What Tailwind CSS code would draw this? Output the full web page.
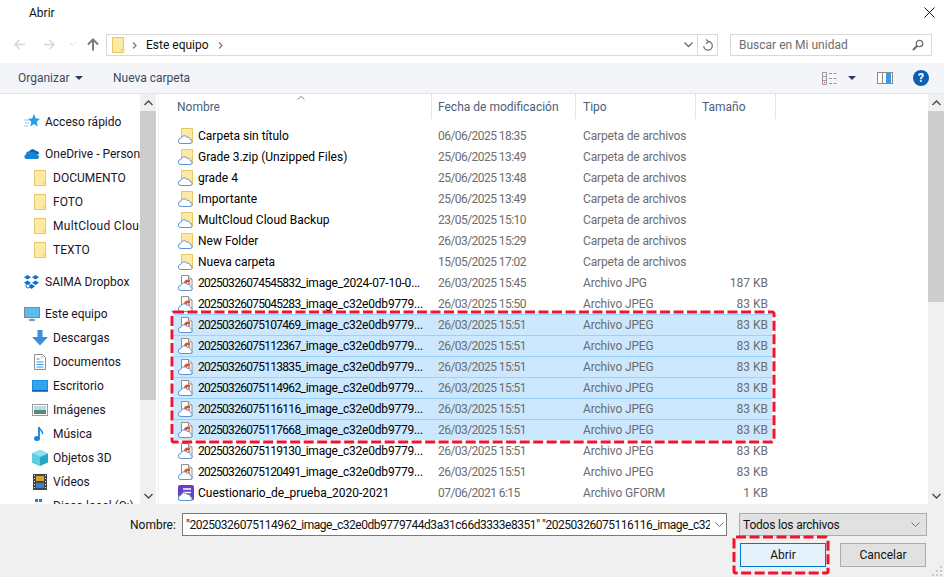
<!DOCTYPE html>
<html lang="es">
<head>
<meta charset="UTF-8" />
<title>Abrir</title>
<script src="https://cdn.jsdelivr.net/npm/@tailwindcss/browser@4"></script>
</head>
<body class="bg-white overflow-hidden">
<svg class="hidden">
  <symbol id="folder" viewBox="0 0 16 16">
    <path d="M2.500 .5h11v13.500l-1.500 1.500h-9.500z" fill="#fdeaa5" stroke="#e8c765"/>
    <path d="M11.500 12.500h2.500v3h-2.500z" fill="#fff3c4" stroke="#e8c765"/>
  </symbol>
  <symbol id="cloud" viewBox="0 0 16 16">
    <path d="M3 15.500a2.500 2.500 0 0 1-.3-5 3.500 3.500 0 0 1 6.300-1.200 2.600 2.600 0 0 1 3.300 2.400 1.900 1.900 0 0 1-.3 3.800z" fill="#fff" stroke="#5f92d8"/>
  </symbol>
  <symbol id="folderCloud" viewBox="0 0 16 16">
    <path d="M3.500 .5h11v13.500h-11z" fill="#fde9a3" stroke="#e8c765"/>
    <path d="M11.500 11.500h3v3h-3z" fill="#fff3c4" stroke="#e8c765"/>
    <use href="#cloud"/>
  </symbol>
  <symbol id="fileCloud" viewBox="0 0 16 16">
    <path d="M3.500 .5h7l3.500 3.500v11h-10.500z" fill="#fff" stroke="#8f8f8f"/>
    <path d="M10.500 .5v3.500h3.500" fill="#eee" stroke="#8f8f8f"/>
    <path d="M5.500 9c0-3.500 3.500-5.500 6.500-4v2.500c-1.800-1-3.500-.3-3.500 2z" fill="#d9502c"/>
    <path d="M10 7l2.300.5-.3 3-2-.5z" fill="#e98a63"/>
    <use href="#cloud"/>
  </symbol>
  <symbol id="formCloud" viewBox="0 0 16 16">
    <rect x="0" y="0" width="16" height="15.500" rx="2" fill="#6b3fc4"/>
    <path d="M5 4h8M5 7.500h8" stroke="#fff" stroke-width="1.500"/>
    <use href="#cloud"/>
  </symbol>
</svg>

<div class="w-[944px] h-[577px] flex flex-col text-[12px] leading-4 text-[#111] font-['Roboto',sans-serif]">
  <!-- title bar -->
  <div class="h-[34px] shrink-0 flex items-start justify-between">
    <span class="ml-[29px] mt-[5px]">Abrir</span>
    <svg class="mt-[7px] mr-[9px]" width="11" height="11" viewBox="0 0 11 11"><path d="M.5 .5l10 10M10.500 .5l-10 10" stroke="#111" fill="none"/></svg>
  </div>

  <!-- nav bar -->
  <div class="h-[29px] shrink-0 flex items-start">
    <div class="w-[106px] h-[21px] flex items-center relative shrink-0">
      <svg class="absolute left-[13px] top-[4px]" width="13" height="13" viewBox="0 0 13 13"><path d="M12 6.500H2M6.500 2L2 6.500 6.500 11" stroke="#d6d6d6" stroke-width="1.500" fill="none"/></svg>
      <svg class="absolute left-[43px] top-[4px]" width="13" height="13" viewBox="0 0 13 13"><path d="M1 6.500h10M6.500 2L11 6.500 6.500 11" stroke="#d6d6d6" stroke-width="1.500" fill="none"/></svg>
      <svg class="absolute left-[69px] top-[8px]" width="7" height="5" viewBox="0 0 7 5"><path d="M.5 .5l3 3 3-3" stroke="#d6d6d6" fill="none"/></svg>
      <svg class="absolute left-[87px] top-[4px]" width="12" height="13" viewBox="0 0 12 13"><path d="M6 12.500V2M1 6.500l5-5 5 5" stroke="#7d7d7d" stroke-width="2" fill="none"/></svg>
    </div>
    <div class="w-[612px] h-[22px] border border-[#d9d9d9] flex items-center shrink-0">
      <svg class="ml-[3px]" width="16" height="16"><use href="#folder"/></svg>
      <svg class="ml-[6px]" width="5" height="7" viewBox="0 0 5 7"><path d="M1 .5l3 3-3 3" stroke="#777" stroke-width="1.200" fill="none"/></svg>
      <span class="ml-[9px]">Este equipo</span>
      <svg class="ml-[9px]" width="5" height="7" viewBox="0 0 5 7"><path d="M1 .5l3 3-3 3" stroke="#777" stroke-width="1.200" fill="none"/></svg>
      <svg class="ml-auto mr-[4px]" width="9" height="6" viewBox="0 0 9 6"><path d="M.5 .5l4 4 4-4" stroke="#6b6b6b" stroke-width="1.300" fill="none"/></svg>
      <div class="w-[20px] h-full border-l border-[#d9d9d9] flex items-center justify-center">
        <svg width="12" height="13" viewBox="0 0 12 13"><path d="M6 2.500a4.300 4.300 0 1 1-4.300 4.500M4 .5l2.500 2-2.500 2.200" stroke="#777" stroke-width="1.300" fill="none"/></svg>
      </div>
    </div>
    <div class="ml-[12px] w-[202px] h-[22px] border border-[#d9d9d9] flex items-center justify-between pl-[8px] pr-[7px] text-[#6d6d6d]">
      <span>Buscar en Mi unidad</span>
      <svg width="12" height="12" viewBox="0 0 12 12"><circle cx="7.500" cy="4.500" r="3.200" stroke="#6b6b6b" stroke-width="1.300" fill="none"/><path d="M5 7l-4 4" stroke="#6b6b6b" stroke-width="2"/></svg>
    </div>
  </div>

  <!-- toolbar -->
  <div class="h-[31px] shrink-0 flex items-center bg-[#f4f5f8] border-b border-[#e4e4e4] text-[#3d4a5c]">
    <span class="ml-[18px] w-[52px]">Organizar</span>
    <svg class="ml-[5px]" width="8" height="4" viewBox="0 0 8 4"><path d="M0 0h8L4 4z" fill="#2b3f5c"/></svg>
    <span class="ml-[30px]">Nueva carpeta</span>
    <svg class="ml-auto" width="17" height="13" viewBox="0 0 17 13"><path d="M.5 .5h4v12h-4zM.5 4.500h4M.5 8.500h4M7 1.500h3M11.500 1.500h3M7 6.500h3M11.500 6.500h3M7 11.500h3M11.500 11.500h3" stroke="#9a9a9a" fill="none"/><rect x="2" y="10" width="1" height="1" fill="#c0392b"/></svg>
    <svg class="ml-[9px]" width="8" height="4" viewBox="0 0 8 4"><path d="M0 0h8L4 4z" fill="#2b3f5c"/></svg>
    <svg class="ml-[21px]" width="16" height="12" viewBox="0 0 16 12"><rect x=".5" y=".5" width="15" height="11" fill="#fff" stroke="#8a8a8a"/><rect x="9" y="1" width="5" height="10" fill="#3f97e8"/><rect x="5" y="1" width="1" height="10" fill="#8a8a8a"/></svg>
    <div class="ml-[20px] mr-[15px] w-4 h-4 rounded-full bg-[#0a5fb4] text-white font-bold text-[12px] flex items-center justify-center">?</div>
  </div>

  <!-- main -->
  <div class="h-[410px] shrink-0 flex">
    <aside class="w-[156px] shrink-0 flex">
      <nav class="w-[140px] overflow-hidden pt-[16px] whitespace-nowrap text-[#1b1428]" id="side"></nav>
      <div class="w-[16px] bg-[#f0f0f0] flex flex-col items-center">
        <div class="h-[17px] w-full flex items-center justify-center">
          <svg width="9" height="6" viewBox="0 0 9 6"><path d="M.5 5l4-4 4 4" stroke="#505050" stroke-width="1.500" fill="none"/></svg>
        </div>
        <div class="h-[289px] w-full bg-[#cdcdcd]"></div>
        <div class="mt-auto h-[17px] w-full flex items-center justify-center">
          <svg width="9" height="6" viewBox="0 0 9 6"><path d="M.5 1l4 4 4-4" stroke="#505050" stroke-width="1.500" fill="none"/></svg>
        </div>
      </div>
    </aside>
    <div class="w-[3px] shrink-0 border-r border-[#f0f0f0]"></div>

    <section class="flex-1 min-w-0 relative">
      <!-- column header -->
      <div class="h-[25px] flex text-[#4c607a] relative">
        <svg class="absolute left-[138px] top-[2px]" width="8" height="4" viewBox="0 0 8 4"><path d="M.5 3.500L4 .5l3.500 3" stroke="#8a8a8a" fill="none"/></svg>
        <div class="w-[273px] pl-[18px] pt-[5px] border-r border-[#e5e5e5]">Nombre</div>
        <div class="w-[144px] pl-[6px] pt-[5px] border-r border-[#e5e5e5]">Fecha de modificación</div>
        <div class="w-[120px] pl-[7px] pt-[5px] border-r border-[#e5e5e5]">Tipo</div>
        <div class="w-[80px] pl-[6px] pt-[5px] border-r border-[#e5e5e5]">Tamaño</div>
      </div>
      <!-- rows -->
      <div class="ml-[15px] w-[598px] mt-[6px]">
        <div id="rowsTop"></div>
        <div class="relative">
          <div id="rowsSel"></div>
          <svg class="absolute left-[-2px] top-[-2px] overflow-visible" width="603" height="131" viewBox="0 0 603 131"><rect x="0" y="0" width="602" height="130" rx="2" fill="none" stroke="#ee1530" stroke-width="3" stroke-dasharray="10 3.500"/></svg>
        </div>
        <div id="rowsEnd"></div>
      </div>
      <!-- list scrollbar -->
      <div class="absolute right-0 top-0 bottom-0 w-[16px] bg-[#f0f0f0] flex flex-col">
        <div class="h-[17px] flex items-center justify-center">
          <svg width="9" height="6" viewBox="0 0 9 6"><path d="M.5 5l4-4 4 4" stroke="#505050" stroke-width="1.500" fill="none"/></svg>
        </div>
        <div class="h-[191px] bg-[#cdcdcd]"></div>
        <div class="mt-auto h-[17px] flex items-center justify-center">
          <svg width="9" height="6" viewBox="0 0 9 6"><path d="M.5 1l4 4 4-4" stroke="#505050" stroke-width="1.500" fill="none"/></svg>
        </div>
      </div>
    </section>
  </div>

  <!-- footer -->
  <div class="flex-1 bg-[#f0f0f0] relative">
    <div class="flex items-center pt-[9px]">
      <span class="ml-[130px] w-[52px]">Nombre:</span>
      <div class="w-[545px] h-[23px] bg-white border border-[#7a7a7a] flex items-center pl-[3px] pr-[2px]">
        <span class="whitespace-nowrap overflow-hidden w-[524px] tracking-[-0.46px]">"20250326075114962_image_c32e0db9779744d3a31c66d3333e8351" "20250326075116116_image_c32</span>
        <svg class="ml-auto shrink-0" width="9" height="5" viewBox="0 0 9 5"><path d="M.5 .5l4 4 4-4" stroke="#707070" fill="none"/></svg>
      </div>
      <div class="ml-[12px] w-[188px] h-[23px] bg-[#e1e1e1] border border-[#adadad] flex items-center justify-between pl-[3px] pr-[6px]">
        <span class="tracking-[-0.2px]">Todos los archivos</span>
        <svg width="9" height="5" viewBox="0 0 9 5"><path d="M.5 .5l4 4 4-4" stroke="#707070" fill="none"/></svg>
      </div>
    </div>
    <div class="flex justify-end gap-[14px] pr-[18px] mt-[7px]">
      <div class="relative">
        <div class="w-[86px] h-[24px] bg-[#e5f1fb] border border-[#0078d7] flex items-center justify-center">Abrir</div>
        <svg class="absolute left-[-6px] top-[-6px] overflow-visible" width="95" height="37" viewBox="0 0 95 37"><rect x="0" y="0" width="94" height="36" rx="2" fill="none" stroke="#ee1530" stroke-width="3" stroke-dasharray="10 3.500"/></svg>
      </div>
      <div class="w-[86px] h-[24px] bg-[#e1e1e1] border border-[#adadad] flex items-center justify-center">Cancelar</div>
    </div>
    <svg class="absolute right-[1px] bottom-[1px]" width="11" height="11" viewBox="0 0 11 11"><path d="M8 1h2v2H8zM4 5h2v2H4zM8 5h2v2H8zM0 9h2v2H0zM4 9h2v2H4zM8 9h2v2H8z" fill="#c9c9c9"/></svg>
  </div>
</div>

<script>
  // sidebar icons
  const folderIcon = '<svg width="16" height="16"><use href="#folder"/></svg>';
  const sideIcons = {
    star: '<svg width="16" height="16" viewBox="0 0 16 16"><path d="M10 0l1.800 4.500 4.200.3-3.300 3 1.100 4.700-3.800-2.500-3.800 2.500 1.100-4.700-3.300-3 4.200-.3z" fill="#2b9be8"/><path d="M0 6h5M1 9h4M0 12h4" stroke="#8cc8f0"/></svg>',
    onedrive: '<svg width="16" height="16" viewBox="0 0 16 16"><path d="M5 5.500a4 4 0 0 1 7-.5 3 3 0 0 1 3 3L9 9z" fill="#0a5fb4"/><path d="M2.500 13a2.300 2.300 0 0 1-.5-4.500 3 3 0 0 1 5-2.500 3.500 3.500 0 0 1 5 2.500 2.300 2.300 0 0 1 3 2.500 2 2 0 0 1-1.500 2z" fill="#1783d9"/></svg>',
    dropbox: '<svg width="16" height="16" viewBox="0 0 16 16"><path d="M3.500 1l3.500 2.300-3.500 2.300L0 3.300zM11.500 1L15 3.300l-3.500 2.300L8 3.300zM3.500 6.500L7 8.800l-3.500 2.300L0 8.800zM11.500 6.500L15 8.800l-3.500 2.300L8 8.800zM7.500 10l3.500 2.300-3.500 2.700-3.500-2.700z" fill="#0a6fdc"/><circle cx="4" cy="12" r="2" fill="#fff" stroke="#0a6fdc"/></svg>',
    pc: '<svg width="16" height="16" viewBox="0 0 16 16"><rect x=".5" y="1.500" width="15" height="10" fill="#5cbcf2" stroke="#7a8a99"/><path d="M5 14h6" stroke="#8a9aa8" stroke-width="2"/><path d="M8 12v2" stroke="#8a9aa8"/></svg>',
    down: '<svg width="16" height="16" viewBox="0 0 16 16"><path d="M5.500 0h5v7H16l-8 8.500L0 7h5.500z" fill="#3a8edb"/></svg>',
    docs: '<svg width="16" height="16" viewBox="0 0 16 16"><path d="M2.500 .5h8l3 3v12h-11z" fill="#fff" stroke="#8f8f8f"/><path d="M4.500 5h3M4.500 8h7M4.500 10.500h7M4.500 13h7" stroke="#3a8edb"/><path d="M9 3h2" stroke="#999"/></svg>',
    desk: '<svg width="16" height="16" viewBox="0 0 16 16"><rect x="0" y="2" width="16" height="12" fill="#1a8fe3"/><path d="M.5 12.500h15" stroke="#0a5fb4"/><rect x="1" y="3" width="14" height="9" fill="#32a4ee"/></svg>',
    img: '<svg width="16" height="16" viewBox="0 0 16 16"><rect x=".5" y="2.500" width="15" height="11" fill="#fff" stroke="#9a9a9a"/><rect x="2" y="4" width="12" height="4" fill="#b8d8ee"/><rect x="2" y="8" width="12" height="4" fill="#5f8a72"/></svg>',
    music: '<svg width="16" height="16" viewBox="0 0 16 16"><path d="M7 1v10.500" stroke="#1783d9" stroke-width="1.800" fill="none"/><path d="M7 1c.5 3 4 3.500 3.500 7" stroke="#1783d9" stroke-width="1.500" fill="none"/><ellipse cx="5" cy="12.500" rx="3" ry="2.500" fill="#1783d9"/></svg>',
    obj: '<svg width="16" height="16" viewBox="0 0 16 16"><path d="M8 0l8 3.500v9L8 16 0 12.500v-9z" fill="#29a6c4"/><path d="M8 0l8 3.500L8 7 0 3.500z" fill="#8fe3ee"/><path d="M0 3.500L8 7v9L0 12.500z" fill="#5fcfe0"/></svg>',
    video: '<svg width="16" height="16" viewBox="0 0 16 16"><rect x="1" y="0" width="14" height="16" fill="#444"/><rect x="4" y="2" width="8" height="5" fill="#d4a72c"/><rect x="4" y="9" width="8" height="5" fill="#3a7fd0"/><path d="M2.500 1v14M13.500 1v14" stroke="#ddd" stroke-dasharray="1 2"/></svg>',
    win: '<svg width="16" height="16" viewBox="0 0 16 16"><path d="M3 1h3v3H3zM7 1h3v3H7z" fill="#1783d9"/></svg>'
  };
  const sideItems = [
    ["Acceso rápido", sideIcons.star, 0, 0],
    ["OneDrive - Personal", sideIcons.onedrive, 0, 8],
    ["DOCUMENTO", folderIcon, 1, 0],
    ["FOTO", folderIcon, 1, 0],
    ["<span class='tracking-[0.3px]'>MultCloud Cloud Backup</span>", folderIcon, 1, 0],
    ["TEXTO", folderIcon, 1, 0],
    ["SAIMA Dropbox", sideIcons.dropbox, 0, 8],
    ["Este equipo", sideIcons.pc, 0, 8],
    ["Descargas", sideIcons.down, 1, 0],
    ["Documentos", sideIcons.docs, 1, 0],
    ["Escritorio", sideIcons.desk, 1, 0],
    ["Imágenes", sideIcons.img, 1, 0],
    ["Música", sideIcons.music, 1, 0],
    ["Objetos 3D", sideIcons.obj, 1, 0],
    ["Vídeos", sideIcons.video, 1, 0],
    ["Disco local (C:)", sideIcons.win, 1, 0]
  ];
  document.getElementById("side").innerHTML = sideItems.map(([name, icon, child, gap]) => `
    <div class="h-[24px] flex items-center ${child ? "pl-[32px]" : "pl-[24px]"} ${gap ? "mt-[8px]" : ""}">
      <span class="w-[21px] shrink-0">${icon}</span><span>${name}</span>
    </div>`).join("");

  // file list
  const longName = "_image_c32e0db9779...";
  const rows = [
    ["Carpeta sin título", "06/06/2025 18:35", "Carpeta de archivos", "", "folderCloud"],
    ["Grade 3.zip (Unzipped Files)", "25/06/2025 13:49", "Carpeta de archivos", "", "folderCloud"],
    ["grade 4", "25/06/2025 13:48", "Carpeta de archivos", "", "folderCloud"],
    ["Importante", "25/06/2025 13:49", "Carpeta de archivos", "", "folderCloud"],
    ["MultCloud Cloud Backup", "23/05/2025 15:10", "Carpeta de archivos", "", "folderCloud"],
    ["New Folder", "26/03/2025 15:29", "Carpeta de archivos", "", "folderCloud"],
    ["Nueva carpeta", "15/05/2025 17:02", "Carpeta de archivos", "", "folderCloud"],
    ["20250326074545832_image_2024-07-10-0...", "26/03/2025 15:45", "Archivo JPG", "187 KB", "fileCloud"],
    ["20250326075045283" + longName, "26/03/2025 15:50", "Archivo JPEG", "83 KB", "fileCloud"]
  ];
  const selected = ["075107469", "075112367", "075113835", "075114962", "075116116", "075117668"].map(id =>
    ["20250326" + id + longName, "26/03/2025 15:51", "Archivo JPEG", "83 KB", "fileCloud"]);
  const rest = [
    ["20250326075119130" + longName, "26/03/2025 15:51", "Archivo JPEG", "83 KB", "fileCloud"],
    ["20250326075120491" + longName, "26/03/2025 15:51", "Archivo JPEG", "83 KB", "fileCloud"],
    ["Cuestionario_de_prueba_2020-2021", "07/06/2021 6:15", "Archivo GFORM", "1 KB", "formCloud"]
  ];
  // long numeric names: digits are tighter than the rest of the string
  function nameHtml(name) {
    if (!/^\d{17}_/.test(name)) return `<span class="ml-[4px]">${name}</span>`;
    return `<span class="ml-[4px] tracking-[-0.2px]"><span class="tracking-[-0.72px]">${name.slice(0, 17)}</span>${name.slice(17)}</span>`;
  }
  function rowHtml([name, date, type, size, icon], sel) {
    return `<div class="h-[21px] grid grid-cols-[264px_145px_1fr] items-center ${sel ? "bg-[#cce8ff] border-t border-[#99d1ff] pb-px" : "border-y border-transparent"}">
      <div class="flex items-center pl-[4px] whitespace-nowrap text-black"><svg class="shrink-0" width="16" height="16"><use href="#${icon}"/></svg>${nameHtml(name)}</div>
      <div class="text-[#6d6d6d] tracking-[-0.55px]">${date}</div>
      <div class="flex justify-between pr-[4px] text-[#6d6d6d]"><span class="tracking-[-0.15px]">${type}</span><span>${size}</span></div>
    </div>`;
  }
  document.getElementById("rowsTop").innerHTML = rows.map(r => rowHtml(r, false)).join("");
  document.getElementById("rowsSel").innerHTML = selected.map(r => rowHtml(r, true)).join("");
  document.getElementById("rowsEnd").innerHTML = rest.map(r => rowHtml(r, false)).join("");
</script>
</body>
</html>
